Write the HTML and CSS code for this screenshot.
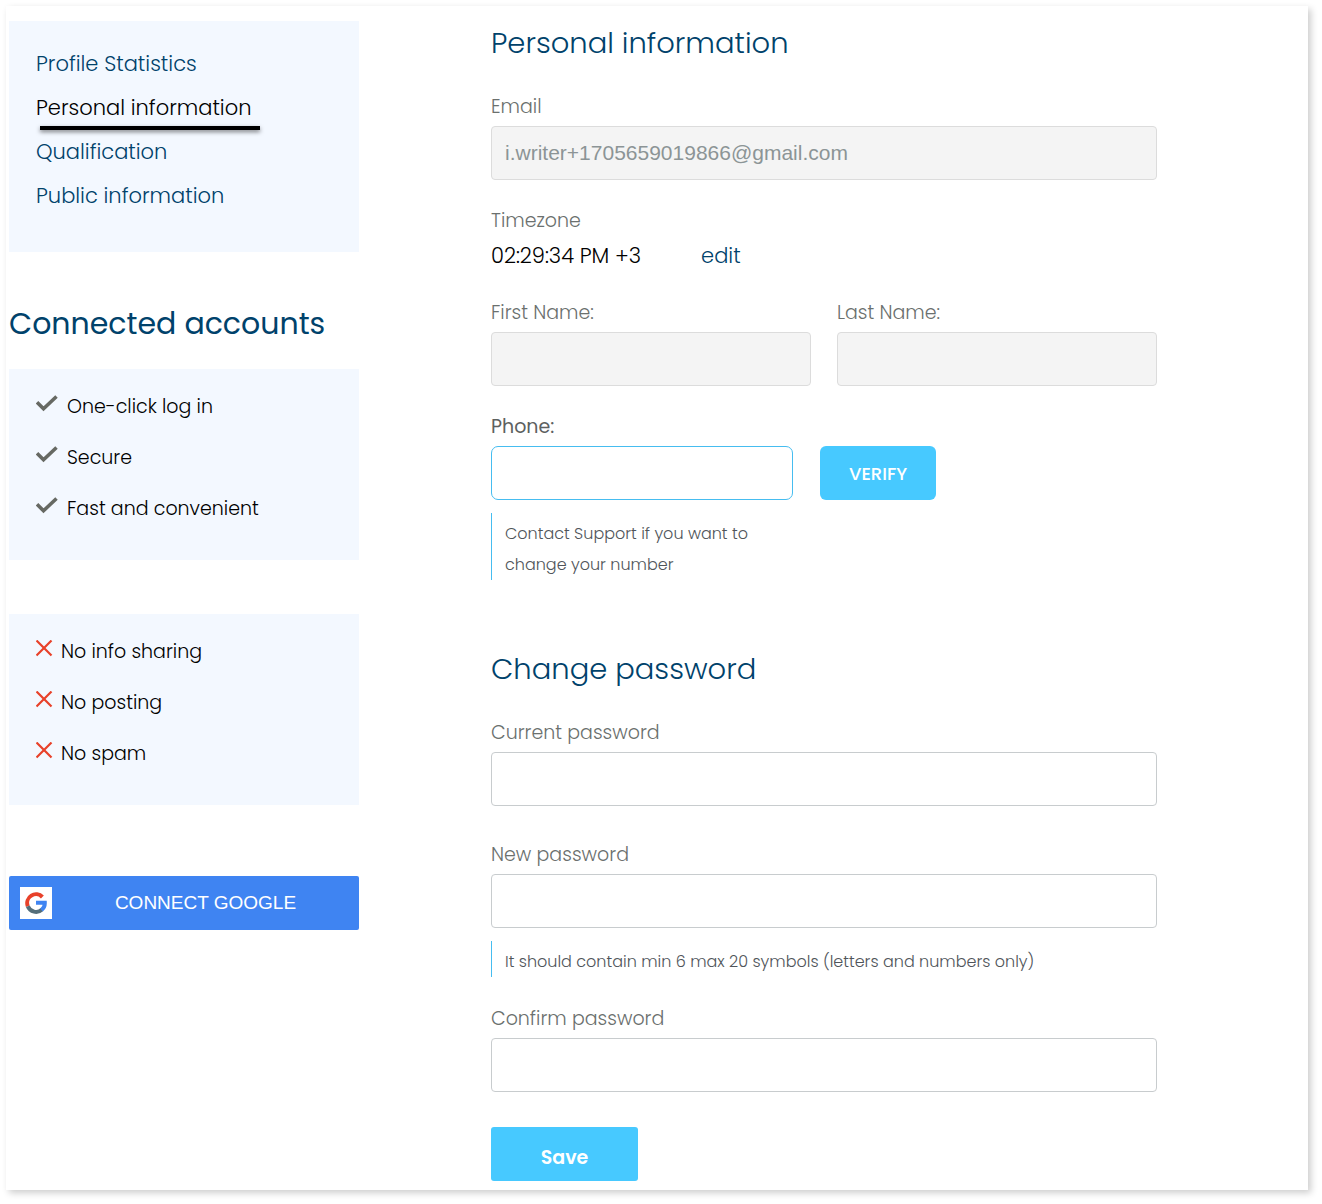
FILE: index.html
```html
<!DOCTYPE html>
<html lang="en">
<head>
<meta charset="utf-8">
<meta name="viewport" content="width=device-width, initial-scale=1">
<title>Personal information</title>
<link rel="stylesheet" href="styles.css">
</head>
<body>
<svg class="sprite" aria-hidden="true">
  <symbol id="check" viewBox="0 0 22 18"><path d="M1 7.300L7.500 13.700L20.500 1.500" fill="none" stroke="#666963" stroke-width="3.600"/></symbol>
  <symbol id="cross" viewBox="0 0 17 17"><path d="M.5 .5L15.500 15.500M15.500 .5L.5 15.500" fill="none" stroke="#e8412a" stroke-width="2.200"/></symbol>
</svg>
<div class="sheet">
  <aside class="sidebar">
    <nav class="panel menu" aria-label="Profile">
      <a href="#statistics">Profile Statistics</a>
      <a href="#personal" class="current" aria-current="page">Personal information</a>
      <a href="#qualification">Qualification</a>
      <a href="#public">Public information</a>
    </nav>
    <h2 class="accounts-title">Connected accounts</h2>
    <ul class="panel points pros">
      <li><svg class="check"><use href="#check"/></svg>One-click log in</li>
      <li><svg class="check"><use href="#check"/></svg>Secure</li>
      <li><svg class="check"><use href="#check"/></svg>Fast and convenient</li>
    </ul>
    <ul class="panel points cons">
      <li><svg class="cross"><use href="#cross"/></svg>No info sharing</li>
      <li><svg class="cross"><use href="#cross"/></svg>No posting</li>
      <li><svg class="cross"><use href="#cross"/></svg>No spam</li>
    </ul>
    <button type="button" class="google">
      <span class="google-logo"><svg viewBox="0 0 22 22" fill="none" stroke-width="4">
        <path d="M2.800 14.200A8.800 8.800 0 0 1 17.400 5" stroke="#e8412a"/>
        <path d="M2.800 14.200A8.800 8.800 0 0 0 17 17.500" stroke="#546e7a"/>
        <path d="M11 10.800H19.800A8.800 8.800 0 0 1 16.500 18" stroke="#3f84f2"/>
      </svg></span>
      <span class="google-text">CONNECT GOOGLE</span>
    </button>
  </aside>
  <main class="content">
    <form>
      <h1 class="title">Personal information</h1>
      <div class="field">
        <label for="email">Email</label>
        <input id="email" type="email" value="i.writer+1705659019866@gmail.com" disabled>
      </div>
      <div class="field">
        <span class="label">Timezone</span>
        <div class="timezone"><time>02:29:34 PM +3</time><a href="#timezone">edit</a></div>
      </div>
      <div class="names">
        <div class="field">
          <label for="first">First Name:</label>
          <input id="first" type="text" disabled>
        </div>
        <div class="field">
          <label for="last">Last Name:</label>
          <input id="last" type="text" disabled>
        </div>
      </div>
      <div class="field phone">
        <label for="phone">Phone:</label>
        <div class="phone-row">
          <input id="phone" type="tel">
          <button type="button" class="verify">VERIFY</button>
        </div>
        <p class="hint">Contact Support if you want to change your number</p>
      </div>
    </form>
    <form class="passwords">
      <h2 class="title">Change password</h2>
      <div class="field">
        <label for="current">Current password</label>
        <input id="current" type="password">
      </div>
      <div class="field with-hint">
        <label for="new">New password</label>
        <input id="new" type="password">
        <p class="hint">It should contain min 6 max 20 symbols (letters and numbers only)</p>
      </div>
      <div class="field">
        <label for="confirm">Confirm password</label>
        <input id="confirm" type="password">
      </div>
      <button type="submit" class="save">Save</button>
    </form>
  </main>
</div>
</body>
</html>
```
FILE: styles.css
```css
* { box-sizing: border-box; }
body {
  margin: 0;
  padding: 6px 14px 14px 6px;
  background: #fff;
  color: #000;
  font-family: Poppins, Inter, sans-serif;
  font-weight: 300;
}
h1, h2, p, ul { margin: 0; padding: 0; font-weight: inherit; }
a { color: #00426b; text-decoration: none; }
button { border: 0; padding: 0; color: #fff; font: inherit; cursor: pointer; }
.sprite { display: none; }
.sheet {
  display: grid;
  grid-template-columns: 350px minmax(0, 1fr);
  column-gap: 132px;
  padding: 15px 151px 9px 3px;
  background: #fff;
  box-shadow: 3px 3px 7px rgba(0, 0, 0, .2);
}
.panel { background: #f3f8ff; }
.menu {
  display: flex;
  flex-direction: column;
  align-items: flex-start;
  padding: 21px 27px 34px;
  font-size: 21px;
  line-height: 44px;
}
.menu .current { position: relative; color: #000; }
.menu .current::after {
  content: "";
  position: absolute;
  left: 4px;
  right: -9px;
  bottom: 0;
  height: 4px;
  background: #000;
  box-shadow: 0 2px 4px rgba(0, 0, 0, .5);
}
.accounts-title {
  margin: 49px 0 23px;
  color: #00426b;
  font-size: 30px;
  font-weight: 400;
  line-height: 45px;
}
.points {
  padding: 12px 27px 26px;
  list-style: none;
  font-size: 19px;
  line-height: 51px;
}
.points li { display: flex; align-items: center; gap: 9px; }
.points svg { flex: none; margin-bottom: 6px; }
.check { width: 22px; height: 18px; }
.cross { width: 17px; height: 17px; }
.cons { margin-top: 54px; }
.cons li { gap: 8px; }
.google {
  display: flex;
  align-items: center;
  width: 100%;
  height: 54px;
  margin-top: 71px;
  padding: 0 0 0 11px;
  border-radius: 2px;
  background: #3f84f2;
  font-family: "Liberation Sans", sans-serif;
  font-size: 19px;
  font-weight: 400;
}
.google-logo { display: flex; padding: 5px; background: #fff; }
.google-logo svg { width: 22px; height: 22px; }
.google-text { flex: 1; text-align: center; }
.title { margin-bottom: 28px; color: #00426b; font-size: 29px; line-height: 44px; }
.field { margin-bottom: 27px; }
label, .label {
  display: block;
  margin-bottom: 5px;
  color: #6b706e;
  font-size: 19px;
  line-height: 28px;
}
input {
  display: block;
  width: 100%;
  height: 54px;
  padding: 0 13px;
  border: 1px solid #c8ccce;
  border-radius: 4px;
  background: #fff;
  font-family: "Liberation Sans", sans-serif;
  font-size: 21px;
}
input:disabled { border-color: #dcdcdc; background: #f4f4f4; color: #8c9496; }
.timezone { display: flex; gap: 60px; font-size: 21px; line-height: 32px; }
.names { display: grid; grid-template-columns: 1fr 1fr; gap: 26px; }
.phone { margin-bottom: 0; }
.phone label { color: #5d615f; font-weight: 400; }
.phone-row { display: flex; gap: 27px; }
.phone-row input { width: 302px; border-color: #46bdf0; border-radius: 7px; }
.verify, .save { background: #47c9ff; }
.verify { width: 116px; border-radius: 6px; font-size: 18px; font-weight: 500; }
.hint {
  margin-top: 13px;
  padding: 5px 0 0 13px;
  border-left: 1px solid #46bdf0;
  color: #50555a;
  font-size: 16px;
  line-height: 31px;
}
.phone .hint { max-width: 302px; }
.passwords { margin-top: 67px; }
.passwords .field { margin-bottom: 35px; }
.passwords .with-hint { margin-bottom: 28px; }
.save {
  width: 147px;
  height: 54px;
  padding-top: 6px;
  border-radius: 3px;
  font-size: 19px;
  font-weight: 600;
}
```
